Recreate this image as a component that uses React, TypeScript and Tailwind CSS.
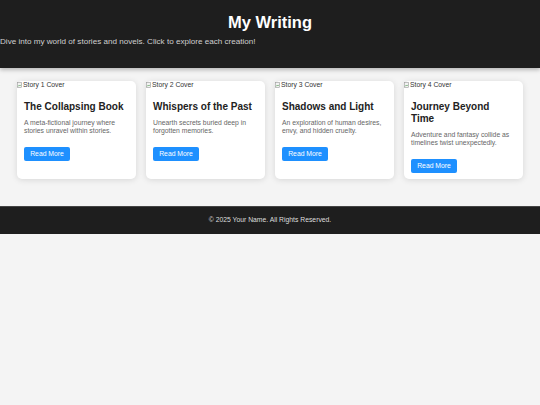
import React from 'react';

const stories = [
  {
    id: 1,
    title: 'The Collapsing Book',
    blurb: 'A meta-fictional journey where stories unravel within stories.',
  },
  {
    id: 2,
    title: 'Whispers of the Past',
    blurb: 'Unearth secrets buried deep in forgotten memories.',
  },
  {
    id: 3,
    title: 'Shadows and Light',
    blurb: 'An exploration of human desires, envy, and hidden cruelty.',
  },
  {
    id: 4,
    title: 'Journey Beyond Time',
    blurb: 'Adventure and fantasy collide as timelines twist unexpectedly.',
  },
];

function BrokenImage({ alt }: { alt: string }) {
  return (
    <div className="flex h-[8px] items-center overflow-visible text-[6.8px] leading-[8px] text-[#333]">
      <svg width="5" height="6" viewBox="0 0 5 6" className="mr-[1px] shrink-0">
        <rect x="0.5" y="0.5" width="4" height="5" fill="#f2f2f2" stroke="#9a9a9a" strokeWidth="0.6" />
        <path d="M1 4.5 L2.2 3 L3 4 L4 2.8" fill="none" stroke="#5aa05a" strokeWidth="0.6" />
      </svg>
      <span>{alt}</span>
    </div>
  );
}

export default function App() {
  return (
    <div
      className="min-h-[405px] bg-[#f4f4f4] text-[#333]"
      style={{ fontFamily: '"Liberation Sans", Arial, sans-serif' }}
    >
      <header className="relative h-[68px] bg-[#1e1e1e] shadow-[0_2px_4px_rgba(0,0,0,0.25)]">
        <h1 className="pt-[13px] text-center text-[16.5px] font-bold leading-[18px] text-white">My Writing</h1>
        <p className="mt-[6px] text-[8.1px] leading-[10px] text-[#cfcfcf]">
          Dive into my world of stories and novels. Click to explore each creation!
        </p>
      </header>

      <main className="grid grid-cols-4 gap-[10px] px-[17px] pt-[13px] pb-[27px]">
        {stories.map((story) => (
          <div
            key={story.id}
            className="flex flex-col rounded-[5px] bg-white pb-[4px] shadow-[0_1px_6px_rgba(0,0,0,0.12)]"
          >
            <BrokenImage alt={`Story ${story.id} Cover`} />
            <div className="pl-[7px] pr-[10px] pt-[12px]">
              <h3 className="text-[10px] font-bold leading-[12px] text-[#222]">{story.title}</h3>
              <p className="mt-[6px] text-[6.8px] leading-[8px] text-[#666]">{story.blurb}</p>
              <button
                type="button"
                className="mt-[12px] h-[14px] w-[46px] rounded-[2px] bg-[#1e90ff] text-[6.8px] leading-[14px] text-white"
              >
                Read More
              </button>
            </div>
          </div>
        ))}
      </main>

      <footer className="flex h-[28px] items-center justify-center border-t border-[#444] bg-[#1e1e1e] text-[6.8px] text-[#ddd]">
        © 2025 Your Name. All Rights Reserved.
      </footer>
    </div>
  );
}
